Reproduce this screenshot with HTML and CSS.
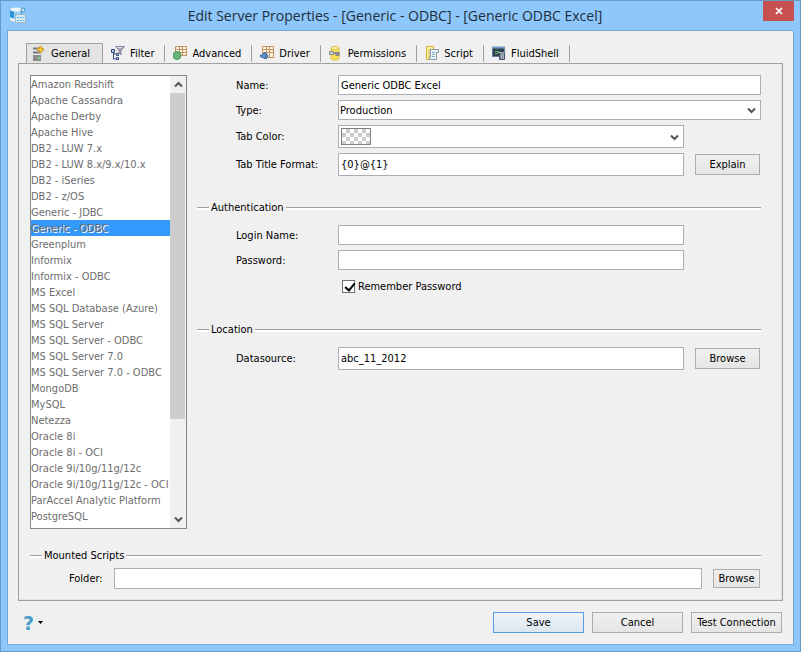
FILE: index.html
```html
<!DOCTYPE html>
<html lang="en">
  <head>
    <meta charset="utf-8" />
    <meta name="viewport" content="width=device-width, initial-scale=1" />
    <title>Edit Server Properties</title>
    <link rel="stylesheet" href="styles.css">
  </head>
  <body>
    <div class="window">
      <header class="titlebar">
        <svg class="app-icon" width="18" height="18" viewBox="0 0 18 18">
          <path d="M1 2h12v10c0 3-12 3-12 0z" fill="#2f93d2"/>
          <path d="M5 4h7v8H5z" fill="#8fd0f2"/>
          <path d="M1 10c2 2 9 2 12 0v3c-3 2-10 2-12 0z" fill="#e8f0f4"/>
          <ellipse cx="7" cy="2.500" rx="6" ry="2" fill="#eef4f7"/>
          <circle cx="14" cy="3" r="2" fill="#c8e4f2" stroke="#4a9cc8"/>
          <rect x="6.500" y="7.500" width="10" height="8" fill="#cfe9f5" stroke="#a9b9c2"/>
          <path d="M8 10.500h7M8 13.500h7" stroke="#62b4d8" stroke-dasharray="2 1"/>
        </svg>
        <h1 class="title">Edit Server Properties - [Generic - ODBC] - [Generic ODBC Excel]</h1>
        <button type="button" class="close" aria-label="Close">
          <svg width="8" height="8" viewBox="0 0 8 8"><path d="M1 1l6 6M7 1l-6 6" stroke="#fff" stroke-width="1.700"/></svg>
        </button>
      </header>

      <form class="client">
        <nav class="tabs">
          <button type="button" class="tab active">
            <svg width="16" height="16" viewBox="0 0 16 16">
              <path d="M1 2h6v3H1zM1 6h8v3H1z" fill="#b0b0b0"/>
              <path d="M1 10h8v6H1z" fill="#8c8c8c"/>
              <path d="M1 3.500h5M1 7.500h8" stroke="#777"/>
              <path d="M6 12h2v2H6z" fill="#5ce08a"/>
              <path d="M7.500 1.500h2v2h2v2h-2v2h-2v-2h-2v-2h2z" fill="#ffd42a" stroke="#d09a30"/>
            </svg>
            General
          </button>
          <button type="button" class="tab">
            <svg width="16" height="16" viewBox="0 0 16 16">
              <path d="M2.500 6v8H6M2.500 9H6" fill="none" stroke="#3a4f7c"/>
              <path d="M.5 4.500h3v3h-3zM5.500 8.500h2v2h-2zM5.500 12.500h2v2h-2z" fill="#b9cbe8" stroke="#314b86"/>
              <path d="M4.500 1.500h9L10 5.500V10L8 8V5.500z" fill="#a9a2c2" stroke="#8a839e"/>
              <path d="M6 2.500h5" stroke="#e2def0"/>
            </svg>
            Filter
          </button>
          <button type="button" class="tab">
            <svg width="16" height="16" viewBox="0 0 16 16">
              <path d="M2.500 1.500h11v9h-11zM2.500 4.500h11M2.500 7.500h11M6.500 1.500v9M9.500 1.500v9" fill="#fbf3e4" stroke="#c4935f"/>
              <circle cx="4" cy="10.500" r="4" fill="#67b374" stroke="#4a9c60"/>
            </svg>
            Advanced
          </button>
          <button type="button" class="tab">
            <svg width="16" height="16" viewBox="0 0 16 16">
              <path d="M2.500 1.500h11v11h-11zM2.500 4.500h11M2.500 7.500h11M6.500 1.500v11M9.500 1.500v11" fill="#fbf3e4" stroke="#c4935f"/>
              <path d="M0 10h2l3-3v7l-3-2H0zM6 8v6l2-3z" fill="#5c9bd6" stroke="#3c6ea8"/>
            </svg>
            Driver
          </button>
          <button type="button" class="tab">
            <svg width="16" height="16" viewBox="0 0 16 16">
              <path d="M2 2.500v11c0 2 8 2 8 0v-11z" fill="#f5df58" stroke="#dcc04a"/>
              <ellipse cx="6" cy="3" rx="4" ry="1.500" fill="#fff6b8" stroke="#dcc04a"/>
              <path d="M4 8h7M7.500 8v3M9.500 8v3" stroke="#8b8b8b" stroke-width="2"/>
              <path d="M.5 6.500h4v3h-4z" fill="#ccc" stroke="#8b8b8b"/>
            </svg>
            Permissions
          </button>
          <button type="button" class="tab">
            <svg width="16" height="16" viewBox="0 0 16 16">
              <path d="M1.500 1.500h7v3H4v10H1.500z" fill="#fff4a6" stroke="#d6b23d"/>
              <path d="M5.500 4.500h8v3h-2v7h-7v-2h1z" fill="#eef3f6" stroke="#8d9ba5"/>
              <path d="M7 7.500h3M7 9.500h3M7 11.500h3" stroke="#7faccc"/>
            </svg>
            Script
          </button>
          <button type="button" class="tab">
            <svg width="16" height="16" viewBox="0 0 16 16">
              <path d="M.5 2.500h12v9H.5z" fill="#31434d" stroke="#5c7e9e"/>
              <path d="M0 2.500h13" stroke="#6f9bc8" stroke-width="2"/>
              <path d="M3 6.500h4M3 8.500h3" stroke="#65b173"/>
              <path d="M7.500 7.500h5v7h-5z" fill="#7c8798" stroke="#45506a"/>
              <path d="M6 7.500h8M9.500 9v5M11.500 9v5" stroke="#a8b2c2"/>
            </svg>
            FluidShell
          </button>
        </nav>

        <section class="panel">
          <div class="columns">
            <div class="server-list">
              <select class="servers" size="28" aria-label="Server type" disabled>
                <option>Amazon Redshift</option>
                <option>Apache Cassandra</option>
                <option>Apache Derby</option>
                <option>Apache Hive</option>
                <option>DB2 - LUW 7.x</option>
                <option>DB2 - LUW 8.x/9.x/10.x</option>
                <option>DB2 - iSeries</option>
                <option>DB2 - z/OS</option>
                <option>Generic - JDBC</option>
                <option selected>Generic - ODBC</option>
                <option>Greenplum</option>
                <option>Informix</option>
                <option>Informix - ODBC</option>
                <option>MS Excel</option>
                <option>MS SQL Database (Azure)</option>
                <option>MS SQL Server</option>
                <option>MS SQL Server - ODBC</option>
                <option>MS SQL Server 7.0</option>
                <option>MS SQL Server 7.0 - ODBC</option>
                <option>MongoDB</option>
                <option>MySQL</option>
                <option>Netezza</option>
                <option>Oracle 8i</option>
                <option>Oracle 8i - OCI</option>
                <option>Oracle 9i/10g/11g/12c</option>
                <option>Oracle 9i/10g/11g/12c - OCI</option>
                <option>ParAccel Analytic Platform</option>
                <option>PostgreSQL</option>
              </select>
              <div class="scrollbar">
                <svg class="arrow" width="9" height="7" viewBox="0 0 9 7"><path d="M1 5.500l3.500-3.500L8 5.500" /></svg>
                <div class="track"><div class="thumb"></div></div>
                <svg class="arrow" width="9" height="7" viewBox="0 0 9 7"><path d="M1 1.500L4.500 5 8 1.500" /></svg>
              </div>
            </div>

            <div class="details">
              <div class="fields">
                <label for="name">Name:</label>
                <input type="text" class="wide" id="name" value="Generic ODBC Excel" />

                <label for="type">Type:</label>
                <div class="combo wide">
                  <select id="type"><option>Production</option></select>
                  <svg class="arrow" width="9" height="7" viewBox="0 0 9 7"><path d="M1 1.500L4.500 5 8 1.500" /></svg>
                </div>

                <label for="color">Tab Color:</label>
                <div class="combo tall">
                  <select id="color"><option></option></select>
                  <span class="swatch"></span>
                  <svg class="arrow" width="9" height="7" viewBox="0 0 9 7"><path d="M1 1.500L4.500 5 8 1.500" /></svg>
                </div>

                <label for="format" class="row-start">Tab Title Format:</label>
                <input type="text" class="tall" id="format" value="{0}@{1}" />
                <button type="button" class="btn">Explain</button>
              </div>

              <h2 class="rule">Authentication</h2>
              <div class="fields">
                <label for="login">Login Name:</label>
                <input type="text" id="login" />
                <label for="password" class="row-start">Password:</label>
                <input type="password" id="password" />
                <label class="remember"><input type="checkbox" checked />Remember Password</label>
              </div>

              <h2 class="rule location">Location</h2>
              <div class="fields">
                <label for="datasource">Datasource:</label>
                <input type="text" class="tall" id="datasource" value="abc_11_2012" />
                <button type="button" class="btn">Browse</button>
              </div>
            </div>
          </div>

          <h2 class="rule mounted">Mounted Scripts</h2>
          <div class="folder">
            <label for="folder">Folder:</label>
            <input type="text" id="folder" />
            <button type="button" class="btn">Browse</button>
          </div>
        </section>

        <footer class="footer">
          <button type="button" class="help" aria-label="Help">
            <span class="mark">?</span>
            <svg width="5" height="3" viewBox="0 0 5 3"><path d="M0 0h5L2.500 3z" /></svg>
          </button>
          <button type="submit" class="btn primary">Save</button>
          <button type="button" class="btn">Cancel</button>
          <button type="button" class="btn">Test Connection</button>
        </footer>
      </form>
    </div>
  </body>
</html>
```
FILE: styles.css
```css
* {
  box-sizing: border-box;
}

body {
  margin: 0;
  font-family: "DejaVu Sans Condensed", "DejaVu Sans", sans-serif;
  font-size: 11px;
  color: #000;
}

button, input, select {
  font: inherit;
  color: inherit;
  margin: 0;
}

.window {
  min-height: 100vh;
  display: flex;
  flex-direction: column;
  padding: 0 6px 6px;
  border: 1px solid #6b9ac4;
  background: #8dc7fb;
}

/* title bar */
.titlebar {
  display: flex;
  height: 29px;
  align-items: flex-start;
}

.app-icon {
  margin: 6px 0 0 2px;
}

.title {
  flex: 1;
  margin: 0;
  font-family: "Open Sans", sans-serif;
  font-size: 14px;
  font-weight: normal;
  line-height: 29px;
  text-align: center;
  color: #222d38;
}

.close {
  display: flex;
  width: 31px;
  height: 20px;
  align-items: center;
  justify-content: center;
  padding: 0;
  border: 0;
  background: #c75050;
}

.client {
  flex: 1;
  display: flex;
  flex-direction: column;
  padding: 12px 10px 11px;
  border: 1px solid #74a7d6;
  background: #f0f0f0;
}

/* tabs */
.tabs {
  display: flex;
  padding-left: 8px;
}

.tab {
  display: flex;
  height: 20px;
  align-items: center;
  gap: 3px;
  padding: 0 11px 0 8px;
  border: 0;
  background: linear-gradient(#a0a0a0, #a0a0a0) right 2px / 1px 17px no-repeat;
}

.tab.active {
  height: 21px;
  padding: 0 12px 2px 5px;
  margin-bottom: -1px;
  border: 1px solid #a0a0a0;
  border-bottom: 0;
  background: #e4e4e4;
}

.panel {
  flex: 1;
  padding: 11px 21px 10px 11px;
  border: 1px solid #a0a0a0;
  box-shadow: inset -1px -1px #e3e3e3;
}

.columns {
  display: flex;
  gap: 10px;
}

/* server list */
.server-list {
  display: flex;
  width: 157px;
  height: 454px;
  border: 1px solid #828790;
  background: #fff;
}

.servers {
  flex: 1;
  min-width: 0;
  padding: 0;
  border: 0;
  border-radius: 0;
  overflow: hidden;
  background: #fff;
  color: #6d6d6d;
  opacity: 1;
}

.servers option {
  height: 16px;
  min-height: 16px;
  padding: 2px 0 0;
  line-height: 14px;
  color: #6d6d6d;
}

.servers option:checked {
  background: linear-gradient(#3399ff, #3399ff);
  color: #6d6d6d;
  text-shadow: 1px 1px #fff;
}

.scrollbar {
  display: flex;
  flex-direction: column;
  width: 16px;
  align-items: center;
  padding: 5px 0;
  background: #f0f0f0;
}

.track {
  flex: 1;
  width: 16px;
  margin: 5px 0;
}

.thumb {
  width: 15px;
  height: 78%;
  background: #cdcdcd;
}

.arrow path {
  fill: none;
  stroke: #555;
  stroke-width: 2;
}

/* form */
.details {
  flex: 1;
}

.fields {
  display: grid;
  grid-template-columns: 91px 1fr 66px;
  column-gap: 11px;
  row-gap: 5px;
  align-items: center;
  padding-left: 39px;
}

.fields .wide {
  grid-column: 2 / 4;
}

.row-start {
  grid-column: 1;
}

input[type='text'], input[type='password'], .combo select {
  width: 100%;
  height: 20px;
  padding: 0 2px;
  border: 1px solid #abadb3;
  border-radius: 0;
  background: #fff;
}

input[type='text'].tall, .combo.tall select {
  height: 23px;
}

.combo {
  position: relative;
  display: flex;
}

.combo select {
  appearance: none;
  padding: 0 1px;
}

.combo .arrow {
  position: absolute;
  right: 5px;
  top: 50%;
  margin-top: -3px;
  pointer-events: none;
}

.swatch {
  position: absolute;
  left: 3px;
  top: 3px;
  width: 30px;
  height: 17px;
  border: 1px solid #808080;
  background: repeating-conic-gradient(#ccc 0 25%, #fff 0 50%) 0 0 / 8px 8px;
}

.remember {
  display: flex;
  grid-column: 2;
  align-items: center;
  gap: 3px;
  padding: 5px 0 0 4px;
}

.remember input {
  width: 13px;
  height: 13px;
  appearance: none;
  border: 1px solid #707070;
  background: #fff;
}

.remember input:checked::after {
  content: '';
  display: block;
  width: 4px;
  height: 8px;
  margin-left: 4px;
  border: solid #000;
  border-width: 0 2px 2px 0;
  transform: rotate(40deg);
}

.btn {
  width: 65px;
  height: 21px;
  padding: 0;
  border: 1px solid #acacac;
  background: linear-gradient(#f0f0f0, #e5e5e5);
  white-space: nowrap;
}

/* section heading with a line through it */
.rule {
  display: flex;
  align-items: center;
  gap: 2px;
  margin: 24px 0 9px;
  font-size: 11px;
  font-weight: normal;
  line-height: 16px;
}

.rule::before, .rule::after {
  content: '';
  width: 12px;
  height: 2px;
  border-top: 1px solid #a0a0a0;
  background: #fff;
}

.rule::after {
  flex: 1;
}

.rule.location {
  margin-top: 29px;
}

.rule.mounted {
  margin: 19px 0 4px;
}

.folder {
  display: flex;
  align-items: center;
  gap: 11px;
  padding-left: 39px;
}

.folder label {
  width: 34px;
  white-space: nowrap;
}

.folder input[type='text'] {
  flex: 1;
  height: 21px;
}

.folder .btn {
  width: 47px;
  height: 19px;
  margin-right: 1px;
}

/* bottom buttons */
.footer {
  display: flex;
  gap: 8px;
  padding: 11px 1px 0 5px;
}

.footer .btn {
  width: 91px;
}

.footer .primary {
  border-color: #569de5;
  background: linear-gradient(#f0f4fa, #dce6f0);
}

.help {
  display: flex;
  height: 21px;
  align-items: center;
  gap: 4px;
  margin-right: auto;
  padding: 0;
  border: 0;
  background: none;
}

.mark {
  font-family: "DejaVu Sans", sans-serif;
  font-size: 19px;
  font-weight: bold;
  color: #4a9cc8;
}
```
